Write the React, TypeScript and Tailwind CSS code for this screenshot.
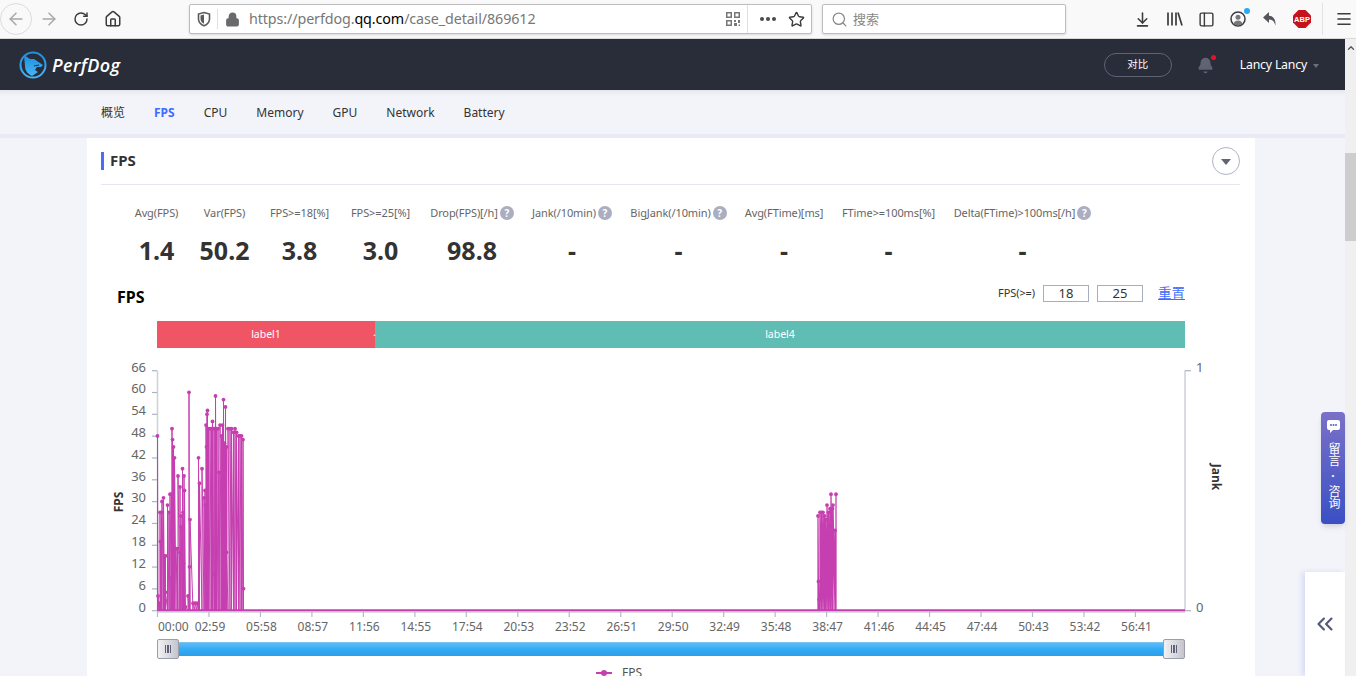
import { ArrowLeft, ArrowRight, RotateCw, Home, Lock, Star, Search, ArrowDownToLine, PanelLeft, Menu, ChevronsLeft, Bell, ChevronUp } from 'lucide-react';

const navItems = ['概览', 'FPS', 'CPU', 'Memory', 'GPU', 'Network', 'Battery'];

const stats = [
  { label: 'Avg(FPS)', value: '1.4', w: 'w-[47px]' },
  { label: 'Var(FPS)', value: '50.2', w: 'w-[49px]' },
  { label: 'FPS>=18[%]', value: '3.8', w: 'w-[61px]' },
  { label: 'FPS>=25[%]', value: '3.0', w: 'w-[61px]' },
  { label: 'Drop(FPS)[/h]', value: '98.8', w: 'w-[82px]', help: true },
  { label: 'Jank(/10min)', value: '-', w: 'w-[78px]', help: true },
  { label: 'BigJank(/10min)', value: '-', w: 'w-[95px]', help: true },
  { label: 'Avg(FTime)[ms]', value: '-', w: 'w-[76px]' },
  { label: 'FTime>=100ms[%]', value: '-', w: 'w-[93px]' },
  { label: 'Delta(FTime)>100ms[/h]', value: '-', w: 'w-[135px]', help: true },
];

const yLabels = [66, 60, 54, 48, 42, 36, 30, 24, 18, 12, 6, 0];
const xLabels = ['00:00', '02:59', '05:58', '08:57', '11:56', '14:55', '17:54', '20:53', '23:52', '26:51', '29:50', '32:49', '35:48', '38:47', '41:46', '44:45', '47:44', '50:43', '53:42', '56:41'];

// peaks read off the reference, page px
const peaks1: number[][] = [
  [157.5, 48], [158, 4], [159, 2], [160, 27], [160.5, 19], [161.5, 27], [162, 30], [163.5, 31], [164.5, 15], [165.5, 15], [165.5, 5],
  [167.5, 29], [169, 27], [170, 32], [171.5, 32], [171, 9], [172, 50], [172.5, 47], [173.5, 45], [174.5, 42], [176, 17], [177.5, 17],
  [178, 37], [180, 34], [180, 16], [181, 26], [181, 23], [182.5, 39], [183, 27], [183.5, 13], [184, 37], [184.5, 33], [185.5, 1],
  [188, 4], [189, 60], [189.5, 12], [190, 25], [193, 2], [195, 2], [197, 2], [198.5, 42], [199.5, 35], [202, 39], [204, 31], [205, 33],
  [205.5, 29], [206, 51], [207, 54], [207.5, 55], [206.5, 45], [207.5, 14], [208.5, 50], [210, 50], [211.5, 50], [212.5, 52], [214, 50],
  [214.5, 10], [215, 50], [215.5, 59], [216.5, 50], [218, 50], [219, 38], [220, 51], [221.5, 48], [222.5, 51], [223.5, 58], [224.5, 46],
  [225.5, 56], [226.5, 45], [226.5, 16], [228, 50], [230, 50], [231.5, 50], [233.5, 49], [235, 50], [236.5, 49], [238.5, 48], [240, 48],
  [241.5, 48], [243, 47], [243.5, 6],
];
const peaks2: number[][] = [
  [818, 26], [818.5, 8], [819, 3], [820, 27], [821.5, 27], [823, 27], [824.5, 26], [825.5, 25], [827, 29], [828.5, 27], [830, 28], [831, 32], [832.5, 28], [833, 29], [835, 22], [836, 32],
];

const toY = (v: number) => 610.5 - v * 3.636;
const zigzag = (pts: number[][]) => pts.map(([x, v]) => `${x},610 ${x},${toY(v)}`).join(' ');

function ChartSvg() {
  return (
    <svg viewBox="87 350 1168 289" className="block h-[289px] w-[1168px]" fontFamily="'Noto Sans', sans-serif">
      {/* axes */}
      <line x1="157.5" y1="370.5" x2="157.5" y2="611" stroke="#cdd0da" strokeWidth="1.5" />
      <line x1="1185" y1="370.5" x2="1185" y2="611" stroke="#cdd0da" strokeWidth="1.5" />
      <line x1="157" y1="612" x2="1185" y2="612" stroke="#b6b9c8" strokeWidth="1" />
      {yLabels.map((v, i) => (
        <g key={v}>
          <line x1="152" x2="157" y1={370.7 + i * 21.82} y2={370.7 + i * 21.82} stroke="#aeb2c2" strokeWidth="1.2" />
          <text x="146" y={371.5 + i * 21.82} textAnchor="end" fontSize="13" fill="#666">{v}</text>
        </g>
      ))}
      <line x1="1185" x2="1191" y1="370.7" y2="370.7" stroke="#aeb2c2" strokeWidth="1.2" />
      <line x1="1185" x2="1191" y1="610.7" y2="610.7" stroke="#aeb2c2" strokeWidth="1.2" />
      <text x="1196" y="371.5" fontSize="13" fill="#666">1</text>
      <text x="1196" y="611.5" fontSize="13" fill="#666">0</text>
      {xLabels.map((t, i) => {
        const x = 157.5 + i * 51.47;
        return (
          <g key={t}>
            <line x1={x} x2={x} y1="612" y2="617" stroke="#b6b9c8" strokeWidth="1.2" />
            <text x={i === 0 ? 158 : x + 1} y="631" textAnchor={i === 0 ? 'start' : 'middle'} fontSize="12" fill="#666">{t}</text>
          </g>
        );
      })}
      <text transform="translate(122.5 502) rotate(-90)" textAnchor="middle" fontSize="12" fontWeight="700" fill="#333">FPS</text>
      <text transform="translate(1212 477) rotate(90)" textAnchor="middle" fontSize="12" fontWeight="700" fill="#333">Jank</text>

      {/* series */}
      <polyline points={zigzag(peaks1)} fill="none" stroke="#c63fb0" strokeWidth="1" />
      <polyline points={zigzag(peaks2)} fill="none" stroke="#c63fb0" strokeWidth="1.3" />
      <line x1="157" y1="610.3" x2="1185" y2="610.3" stroke="#c63fb0" strokeWidth="2" />
      {[...peaks1, ...peaks2].map(([x, v], i) => (
        <circle key={i} cx={x} cy={toY(v)} r="1.9" fill="#c63fb0" />
      ))}
    </svg>
  );
}

function SliderHandle() {
  return (
    <div className="flex h-[20px] w-[22px] shrink-0 items-center justify-center gap-px rounded-[2px] border border-[#9a9dae] bg-gradient-to-r from-[#f2f2f4] to-[#c4c5cc]">
      <span className="h-[8px] w-[1.5px] bg-[#5c6078]" />
      <span className="h-[8px] w-[1.5px] bg-[#5c6078]" />
      <span className="h-[8px] w-[1.5px] bg-[#5c6078]" />
    </div>
  );
}

function Logo() {
  return (
    <svg width="28" height="28" viewBox="0 0 28 28">
      <defs>
        <linearGradient id="lg" x1="0" y1="0" x2="0" y2="1">
          <stop offset="0" stopColor="#1f8fe0" />
          <stop offset="1" stopColor="#45b6f7" />
        </linearGradient>
      </defs>
      <circle cx="14" cy="14" r="12.5" fill="none" stroke="url(#lg)" strokeWidth="2" />
      <path d="M5 4l6 4 4 0 9 6-2 2-4 0-2 3 3 2-6 4c-4-2-7-5-7-10z" fill="url(#lg)" />
      <path d="M15 15l5-1" stroke="#292d3a" strokeWidth="1.2" />
    </svg>
  );
}

function Toolbar() {
  return (
    <div className="flex h-[39px] shrink-0 items-center border-b border-[#d8d8da] bg-[#f9f9fa] text-[#3c3c3f]">
      <div className="flex h-[32px] w-[32px] items-center justify-center rounded-full border border-[#dcdcdc]">
        <ArrowLeft size={20} strokeWidth={1.8} className="text-[#a8a8ab]" />
      </div>
      <ArrowRight size={20} strokeWidth={1.8} className="ml-[7px] text-[#a8a8ab]" />
      <RotateCw size={16} strokeWidth={2.2} className="ml-[14px]" />
      <Home size={18} strokeWidth={2} className="ml-[15px]" />
      <div className="ml-[67px] flex h-[30px] w-[623px] items-center rounded-[2px] border border-[#bdbdbf] bg-white shadow-sm">
        <svg width="14" height="16" viewBox="0 0 14 16" className="ml-[7px]">
          <path d="M7 1.5l5.5 1.5v5c0 3.5-3 5.8-5.5 6.8-2.5-1-5.5-3.3-5.5-6.8V3z" fill="none" stroke="#5a5a5d" strokeWidth="1.6" />
          <path d="M7 3.5v9.3c-1.8-.9-3.5-2.5-3.5-4.8V4.5z" fill="#5a5a5d" />
        </svg>
        <div className="ml-[6px] h-[20px] w-px bg-[#e0e0e2]" />
        <Lock size={15} strokeWidth={2.4} className="ml-[7px] fill-[#6a6a6d] text-[#6a6a6d]" />
        <div className="ml-[9px] w-[470px] text-[14.3px] tracking-[-0.1px] whitespace-nowrap text-[#777] font-['Noto_Sans',sans-serif]">
          https://perfdog.<span className="text-black">qq.com</span>/case_detail/869612
        </div>
        <svg width="14" height="16" viewBox="0 0 14 16" className="ml-[7px]" fill="#77777a">
          <path d="M0 1h6v6H0zm1.5 1.5v3h3v-3zM8 1h6v6H8zm1.5 1.5v3h3v-3zM0 9h6v6H0zm1.5 1.5v3h3v-3zM8 9h2v2H8zm4 0h2v3h-2zM8 12h3v3H8zm4.5 1.5H14V15h-1.5z" />
        </svg>
        <div className="ml-[7px] h-[28px] w-px bg-[#e0e0e2]" />
        <div className="ml-[12px] flex gap-[2px]">
          <span className="size-[4px] rounded-full bg-[#4a4a4d]" />
          <span className="size-[4px] rounded-full bg-[#4a4a4d]" />
          <span className="size-[4px] rounded-full bg-[#4a4a4d]" />
        </div>
        <Star size={17} strokeWidth={2} className="ml-[12px]" />
      </div>
      <div className="ml-[10px] flex h-[30px] w-[244px] items-center rounded-[2px] border border-[#bdbdbf] bg-white shadow-sm">
        <Search size={17} strokeWidth={1.8} className="ml-[8px] text-[#8a8a8d]" />
        <span className="ml-[5px] text-[13px] text-[#888] font-['Noto_Sans_CJK_SC',sans-serif]">搜索</span>
      </div>
      <ArrowDownToLine size={17} strokeWidth={2.2} className="ml-[68px]" />
      <svg width="17" height="16" viewBox="0 0 17 16" className="ml-[15px]" stroke="#3c3c3f" strokeWidth="1.7" fill="none">
        <path d="M2 1.5v13M6 1.5v13M10 1.5v13M12 1.5l4 13" />
      </svg>
      <PanelLeft size={17} strokeWidth={2} className="ml-[15px]" />
      <div className="relative ml-[15px] flex size-[16px] items-center justify-center overflow-visible">
        <svg width="16" height="16" viewBox="0 0 16 16" fill="none">
          <circle cx="8" cy="8" r="7" stroke="#3c3c3f" strokeWidth="1.5" />
          <circle cx="8" cy="6.2" r="2.5" fill="#77777a" />
          <path d="M3.5 12.5c.8-2 2.5-3 4.5-3s3.7 1 4.5 3c-1 1.2-2.7 2-4.5 2s-3.5-.8-4.5-2z" fill="#77777a" />
        </svg>
        <span className="absolute -top-[3px] -right-[4px] size-[6px] rounded-full bg-[#2aa7f5]" />
      </div>
      <svg width="16" height="16" viewBox="0 0 16 16" className="ml-[16px]">
        <path d="M7 1L1 6.5 7 12V8.5c3 0 5 1.3 6.5 6 .5-6-2.5-9.5-6.5-9.8z" fill="#55565c" />
      </svg>
      <svg width="18" height="18" viewBox="0 0 18 18" className="ml-[15px]">
        <path d="M5.5 0h7L18 5.5v7L12.5 18h-7L0 12.5v-7z" fill="#c5121c" />
        <text x="9" y="11.8" textAnchor="middle" fontSize="7.5" fontWeight="700" fill="#fff" fontFamily="'Liberation Sans', sans-serif">ABP</text>
      </svg>
      <div className="ml-[11px] h-[32px] w-px bg-[#e2e2e4]" />
      <Menu size={18} strokeWidth={2.2} className="ml-[12px]" />
    </div>
  );
}

export default function App() {
  return (
    <div className="relative flex h-[676px] w-[1356px] flex-col overflow-hidden bg-white font-['Noto_Sans','Noto_Sans_CJK_SC',sans-serif]">
      <Toolbar />
      <div className="flex min-h-0 flex-1">
        <div className="flex min-w-0 flex-1 flex-col bg-[#f3f4f9]">
          {/* Header */}
          <div className="flex h-[51px] shrink-0 items-center bg-[#292d3a] pt-[1px] pr-[26px] pl-[19px] text-white">
            <Logo />
            <span className="ml-[5px] text-[18px] font-semibold tracking-[0.4px] italic font-['Open_Sans',sans-serif]">PerfDog</span>
            <button className="ml-auto flex h-[24px] w-[68px] items-center justify-center rounded-full border border-[#5f6372] text-[10.5px]">对比</button>
            <div className="relative ml-[25px]">
              <Bell size={17} className="fill-[#5f6372] text-[#5f6372]" />
              <span className="absolute -top-[2px] right-[-2px] size-[5px] rounded-full bg-[#e8112d]" />
            </div>
            <span className="ml-[26px] text-[12.3px] tracking-[-0.2px]">Lancy Lancy</span>
            <span className="mt-[2px] ml-[6px] h-0 w-0 border-x-[3px] border-t-[4px] border-x-transparent border-t-[#6b6f7e]" />
          </div>

          {/* Nav */}
          <div className="flex h-[44px] shrink-0 items-center gap-[29px] pt-[2px] pl-[101px] text-[12px] text-[#333] shadow-[inset_0_6px_6px_-6px_rgba(40,45,70,0.15)]">
            {navItems.map((n) => (
              <span key={n} className={n === 'FPS' ? 'font-bold text-[#3f6bff]' : ''}>{n}</span>
            ))}
          </div>
          <div className="h-[4px] shrink-0 bg-[#e9eaf5]" />

          {/* Card */}
          <div className="ml-[87px] w-[1168px] flex-1 bg-white">
            <div className="mr-[15px] ml-[14px] flex h-[47px] items-center border-b border-[#e6e6f0] pb-[1px]">
              <div className="h-[18px] w-[3px] bg-[#4a6cf7]" />
              <h2 className="ml-[6px] text-[15px] font-bold text-[#333]">FPS</h2>
              <div className="ml-auto flex size-[28px] items-center justify-center rounded-full border border-[#b0b3c6]">
                <span className="mt-[2px] h-0 w-0 border-x-[5px] border-t-[6px] border-x-transparent border-t-[#5f6372]" />
              </div>
            </div>

            <div className="mt-[20px] flex gap-[20px] pl-[46px]">
              {stats.map((s) => (
                <div key={s.label} className={`flex flex-col items-center ${s.w}`}>
                  <div className="flex h-[16px] items-center whitespace-nowrap text-[11px] tracking-[-0.1px] text-[#666]">
                    {s.label}
                    {s.help && (
                      <span className="ml-[2px] flex size-[14px] items-center justify-center rounded-full bg-[#aaaec0] text-[10px] font-bold text-white">?</span>
                    )}
                  </div>
                  <div className="mt-[11px] text-[25px] leading-[36px] font-bold text-[#333]">{s.value}</div>
                </div>
              ))}
            </div>

            <div className="mt-[17px] flex h-[24px] items-center pr-[70px] pl-[30px]">
              <h3 className="text-[16px] font-bold text-black">FPS</h3>
              <div className="mb-[7px] ml-auto flex items-center">
                <span className="text-[11px] tracking-[-0.1px] text-[#333]">FPS(&gt;=)</span>
                <div className="ml-[8px] flex h-[17px] w-[46px] items-center justify-center border border-[#a9adc2] text-[13px] text-[#333]">18</div>
                <div className="ml-[8px] flex h-[17px] w-[46px] items-center justify-center border border-[#a9adc2] text-[13px] text-[#333]">25</div>
                <a className="ml-[15px] text-[13.5px] text-[#3f6bff] underline">重置</a>
              </div>
            </div>

            <div className="mt-[12px] ml-[70px] flex h-[27px] w-[1028px] text-[10.5px] text-white">
              <div className="flex w-[218px] items-center justify-center bg-[#f05566]">label1</div>
              <div className="relative flex flex-1 items-center justify-center bg-[#5fbdb3]">
                <span className="absolute top-[4px] -left-[2px]">.</span>
                label4
              </div>
            </div>

            <div className="mt-[2px]">
              <ChartSvg />
            </div>

            <div className="ml-[70px] flex h-[20px] w-[1028px] items-center">
              <SliderHandle />
              <div className="h-[14px] flex-1 border-t border-[#7cc4f0] bg-gradient-to-b from-[#5cbcf7] via-[#33aaf5] to-[#2b9fe8]" />
              <SliderHandle />
            </div>

            <div className="mt-[4px] flex h-[20px] items-center pl-[509px] text-[12px] text-[#555]">
              <div className="relative h-[2px] w-[16px] bg-[#c63fb0]">
                <span className="absolute -top-[2px] left-[5px] size-[6px] rounded-full bg-[#c63fb0]" />
              </div>
              <span className="ml-[10px]">FPS</span>
            </div>
          </div>
        </div>

        {/* Scrollbar */}
        <div className="relative w-[11px] shrink-0 bg-[#f0f0f0]">
          <ChevronUp size={10} strokeWidth={3} className="mt-[4px] ml-[0.5px] text-[#555]" />
          <div className="mt-[100px] h-[88px] w-full bg-[#cdcdcd]" />
        </div>
      </div>

      {/* Floating widgets */}
      <div className="absolute top-[412px] left-[1321px] flex h-[112px] w-[24px] flex-col items-center rounded-[4px] bg-gradient-to-b from-[#7a70c8] to-[#3a4fc4] pt-[8px] text-white shadow-md">
        <svg width="13" height="13" viewBox="0 0 13 13">
          <path d="M2 0h9a2 2 0 012 2v6a2 2 0 01-2 2H6l-3 3v-3H2a2 2 0 01-2-2V2a2 2 0 012-2z" fill="#fff" />
          <circle cx="4" cy="5" r="1" fill="#5a60c6" />
          <circle cx="6.5" cy="5" r="1" fill="#5a60c6" />
          <circle cx="9" cy="5" r="1" fill="#5a60c6" />
        </svg>
        <div className="mt-[9px] flex flex-col items-center text-[12px] leading-[12px]">
          <span className="[writing-mode:vertical-rl]">留言</span>
          <span className="my-[5px] h-[9px] leading-[9px] font-bold">·</span>
          <span className="[writing-mode:vertical-rl]">咨询</span>
        </div>
      </div>
      <div className="absolute top-[572px] left-[1305px] flex h-[104px] w-[40px] items-center justify-center bg-white shadow-[-3px_0_5px_rgba(90,110,230,0.18)]">
        <ChevronsLeft size={26} strokeWidth={2} className="text-[#555a7a]" />
      </div>
    </div>
  );
}
